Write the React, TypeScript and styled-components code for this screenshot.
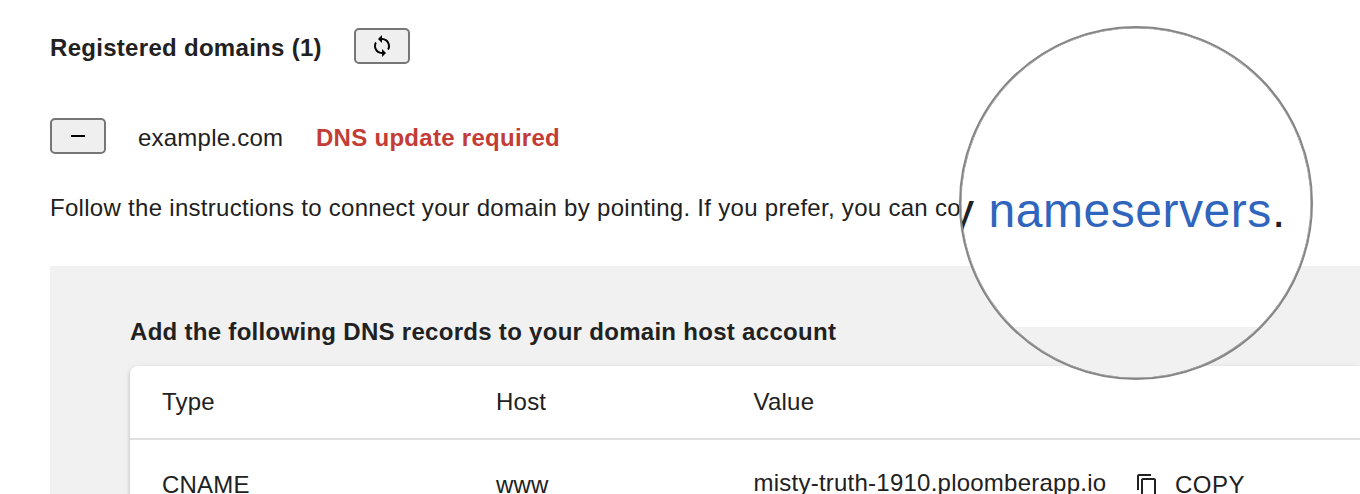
import React from "react";
import styled, { createGlobalStyle } from "styled-components";

const GlobalStyle = createGlobalStyle`
  html, body { margin: 0; background: #fff; }
  body { overflow: hidden; }
`;

const Page = styled.main`
  position: relative;
  box-sizing: border-box;
  width: 1360px;
  height: 494px;
  padding: 28px 0 0 50px;
  overflow: hidden;
  background: #fff;
  color: #212121;
  font-family: "Liberation Sans", Arial, sans-serif;
  font-size: 24px;
  line-height: 36px;
  letter-spacing: 0.225px;
  white-space: nowrap;
`;

const HeaderRow = styled.header`
  display: flex;
  align-items: center;
  gap: 32px;
  height: 36px;
`;

const DomainName = styled.span`
  width: 146px;
  padding-top: 4px;
`;

const Title = styled.h2`
  margin: 0;
  font-size: 24px;
  font-weight: 700;
  line-height: 36px;
  letter-spacing: 0.295px;
`;

const HeaderTitle = styled(Title)`
  width: 272px;
  padding-top: 4px;
`;

const IconButton = styled.button`
  box-sizing: border-box;
  display: flex;
  align-items: center;
  justify-content: center;
  width: 56px;
  height: 36px;
  padding: 0;
  border: 2px solid #767676;
  border-radius: 5px;
  background: #efefef;
  color: #000;
`;

const Icon = styled.svg`
  width: 24px;
  height: 24px;
  fill: currentColor;
  flex: none;
`;

const DomainRow = styled.section`
  display: flex;
  align-items: center;
  gap: 32px;
  height: 36px;
  margin-top: 54px;
`;

const Status = styled.strong`
  padding-top: 4px;
  color: #c33c35;
  letter-spacing: 0.28px;
`;

const Instructions = styled.p`
  width: 911px;
  margin: 36px 0 0;
  overflow: hidden;
  letter-spacing: 0.295px;
`;

const RecordsPanel = styled.section`
  box-sizing: border-box;
  height: 240px;
  margin-top: 40px;
  padding: 48px 0 0 80px;
  background: #f1f1f1;
`;

const Card = styled.div`
  height: 200px;
  margin-top: 16px;
  border-radius: 8px 0 0 0;
  background: #fff;
  box-shadow: 0 2px 4px rgba(0, 0, 0, 0.14), 0 2px 6px rgba(0, 0, 0, 0.1);
`;

const TableRow = styled.div`
  box-sizing: border-box;
  display: grid;
  grid-template-columns: 334px 257.5px 1fr;
  height: 74px;
  padding: 18px 0 0 32px;
  border-bottom: 2px solid #e0e0e0;
`;

const RecordRow = styled(TableRow)`
  height: 100px;
  padding-top: 27px;
`;

const ValueCell = styled.div`
  display: flex;
  align-items: flex-start;
`;

const HostName = styled.span`
  width: 381.5px;
  margin-top: -2px;
  letter-spacing: 0.235px;
`;

const CopyAction = styled.div`
  display: flex;
  gap: 16px;
  align-items: flex-start;
  letter-spacing: 0.5px;
  ${Icon} { margin-top: 6px; }
`;

const Lens = styled.aside`
  position: absolute;
  left: 959px;
  top: 26px;
  box-sizing: border-box;
  width: 354px;
  height: 354px;
  border: 2px solid #858585;
  box-shadow: inset 0 0 0 0.5px #858585;
  border-radius: 50%;
  overflow: hidden;
  background: linear-gradient(#fff 299px, #f1f1f1 299px);
  font-size: 48px;
  line-height: 56px;
`;

const LensText = styled.p`
  margin: 155px 0 0 -11px;
  letter-spacing: 0.55px;
`;

const LensLink = styled.a`
  color: #2f65bd;
`;

const SyncIcon = () => (
  <Icon viewBox="0 0 24 24">
    <path d="M12 4V1L8 5l4 4V6c3.31 0 6 2.69 6 6 0 1.01-.25 1.97-.7 2.8l1.46 1.46C19.54 15.03 20 13.57 20 12c0-4.42-3.58-8-8-8zm0 14c-3.31 0-6-2.69-6-6 0-1.01.25-1.97.7-2.8L5.24 7.74C4.46 8.97 4 10.43 4 12c0 4.42 3.58 8 8 8v3l4-4-4-4v3z" />
  </Icon>
);

const MinusIcon = () => (
  <Icon viewBox="0 0 24 24">
    <path d="M19 13H5v-2h14v2z" />
  </Icon>
);

const CopyIcon = () => (
  <Icon viewBox="0 0 24 24">
    <path d="M16 1H4c-1.1 0-2 .9-2 2v14h2V3h12V1zm3 4H8c-1.1 0-2 .9-2 2v14c0 1.1.9 2 2 2h11c1.1 0 2-.9 2-2V7c0-1.1-.9-2-2-2zm0 16H8V7h11v14z" />
  </Icon>
);

export default function App() {
  return (
    <Page>
      <GlobalStyle />
      <HeaderRow>
        <HeaderTitle>Registered domains (1)</HeaderTitle>
        <IconButton aria-label="Refresh"><SyncIcon /></IconButton>
      </HeaderRow>
      <DomainRow>
        <IconButton aria-label="Collapse"><MinusIcon /></IconButton>
        <DomainName>example.com</DomainName>
        <Status>DNS update required</Status>
      </DomainRow>
      <Instructions>
        Follow the instructions to connect your domain by pointing. If you prefer, you can co
      </Instructions>
      <RecordsPanel>
        <Title>Add the following DNS records to your domain host account</Title>
        <Card>
          <TableRow>
            <span>Type</span>
            <span>Host</span>
            <span>Value</span>
          </TableRow>
          <RecordRow>
            <span>CNAME</span>
            <span>www</span>
            <ValueCell>
              <HostName>misty-truth-1910.ploomberapp.io</HostName>
              <CopyAction>
                <CopyIcon />
                <span>COPY</span>
              </CopyAction>
            </ValueCell>
          </RecordRow>
        </Card>
      </RecordsPanel>
      <Lens>
        <LensText>
          y <LensLink>nameservers</LensLink>.
        </LensText>
      </Lens>
    </Page>
  );
}
